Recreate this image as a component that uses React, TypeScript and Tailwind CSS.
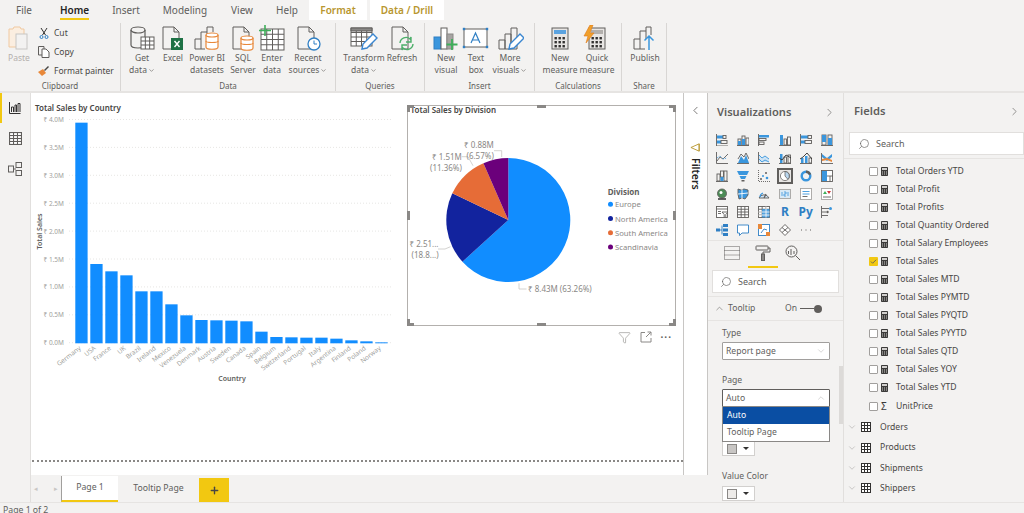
import { ChevronDown, ChevronLeft, ChevronRight, ChevronUp, Funnel, Plus, Search } from "lucide-react";
import type { ReactNode } from "react";

const G = "#605e5c";
const B = "#3a96dd";
const O = "#e8883a";

const topTabs = [
  { label: "File", w: "w-[48px]" },
  { label: "Home", w: "w-[53px]", active: true },
  { label: "Insert", w: "w-[50px]" },
  { label: "Modeling", w: "w-[68px]" },
  { label: "View", w: "w-[46px]" },
  { label: "Help", w: "w-[44px]" },
];

const docPath = "M4 2h11l5 5v17H4z M15 2v5h5";

function Ico({ children }: { children: ReactNode }) {
  return (
    <svg viewBox="0 0 28 26" className="w-[28px] h-[26px]" fill="none" stroke={G} strokeWidth="1">
      {children}
    </svg>
  );
}

const grid = (x: number, y: number, w: number, h: number, c: number, r: number, color = G) => (
  <g stroke={color} fill="#fff">
    <rect x={x} y={y} width={w} height={h} />
    {Array.from({ length: c - 1 }, (_, i) => (
      <line key={i} x1={x + ((i + 1) * w) / c} x2={x + ((i + 1) * w) / c} y1={y} y2={y + h} />
    ))}
    {Array.from({ length: r - 1 }, (_, i) => (
      <line key={i} x1={x} x2={x + w} y1={y + ((i + 1) * h) / r} y2={y + ((i + 1) * h) / r} />
    ))}
  </g>
);

const cyl = (x: number, y: number, w: number, h: number, color: string) => (
  <g stroke={color} fill="#fff" strokeWidth="1.2">
    <path d={`M${x} ${y + 2}v${h - 4}c0 3 ${w} 3 ${w} 0v${-(h - 4)}`} />
    <ellipse cx={x + w / 2} cy={y + 2} rx={w / 2} ry="2" />
    <path d={`M${x} ${y + h / 2}c0 2 ${w} 2 ${w} 0`} />
  </g>
);

const calc = (top: string) => (
  <g>
    <rect x="6" y="3" width="16" height="21" fill="#e8e6e4" stroke={G} />
    <rect x="8" y="5" width="12" height="4" fill={top} stroke="none" />
    {[0, 1, 2].map((r) =>
      [0, 1, 2].map((c) => <rect key={`${r}${c}`} x={8.5 + c * 4} y={12 + r * 4} width="2.4" height="2.4" fill="#323130" stroke="none" />),
    )}
  </g>
);

const pencil = (dx: number, dy: number) => (
  <g transform={`translate(${dx} ${dy})`}>
    <path d="M2 17l1-5 10-10 4 4-10 10z" fill="#fff" stroke="#3a86d0" strokeWidth="1.4" />
  </g>
);

const bars3 = <path d="M3 24v-9h6v9 M9 24V9h6v15 M15 24V3h6v21 M3 24h18" />;

const ribbonIcons: Record<string, ReactNode> = {
  getData: (
    <>
      <path d="M3 5v15c0 4 14 4 14 0V5" strokeWidth="1.2" />
      <ellipse cx="10" cy="5" rx="7" ry="3" strokeWidth="1.2" />
      {grid(13, 12, 13, 12, 3, 3)}
    </>
  ),
  excel: (
    <>
      <path d={docPath} />
      <rect x="12" y="13" width="12" height="12" fill="#1e7145" stroke="none" />
      <path d="M15.5 16l5 6m0-6l-5 6" stroke="#fff" strokeWidth="1.4" />
    </>
  ),
  pbi: (
    <>
      <path d="M2 24V14h6v10 M8 14V7h6v5 M14 7V2h6v5" />
      <path d="M2 24h10" />
      {cyl(13, 8, 12, 16, O)}
    </>
  ),
  sql: (
    <>
      <path d={docPath} />
      {cyl(12, 11, 12, 14, O)}
    </>
  ),
  enter: (
    <>
      {grid(3, 4, 23, 21, 4, 4)}
      <path d="M7 0v11M1 5.5h12" stroke="#3fae5a" strokeWidth="1.6" />
    </>
  ),
  recent: (
    <>
      <path d={docPath} />
      <circle cx="20" cy="19" r="6" fill="#fff" stroke="#2f7fc4" strokeWidth="1.3" />
      <path d="M20 15.5V19h3" stroke="#2f7fc4" />
    </>
  ),
  transform: (
    <>
      {grid(1, 3, 21, 18, 4, 4)}
      <path d="M1 3h21v3H1z" fill="#8a8886" stroke={G} />
      {pencil(10, 7)}
    </>
  ),
  refresh: (
    <>
      <path d={docPath} />
      <path d="M12 18a6 6 0 0 1 10-4l1-2v5h-5" stroke="#4caf6a" strokeWidth="1.4" />
      <path d="M25 19a6 6 0 0 1-10 4l-1 2v-5h5" stroke="#4caf6a" strokeWidth="1.4" />
    </>
  ),
  newVisual: (
    <>
      <rect x="2" y="12" width="7" height="12" fill="#3a96dd" stroke="#2f7fc4" />
      <rect x="9" y="3" width="6" height="21" fill="#fff" />
      <rect x="15" y="9" width="6" height="15" fill="#a6a4a2" stroke="#8a8886" />
      <path d="M20 14v11M14.500 19.500h11" stroke="#3fae5a" strokeWidth="1.8" />
    </>
  ),
  textBox: (
    <>
      <rect x="2" y="4" width="23" height="18" fill="#fff" stroke="#605e5c" />
      {[[2, 4], [25, 4], [2, 22], [25, 22]].map(([x, y]) => (
        <rect key={`${x}${y}`} x={x - 1.2} y={y - 1.2} width="2.4" height="2.4" fill="#2f7fc4" stroke="none" />
      ))}
      <path d="M9 18l4.500-10 4.500 10M10.500 15h6" stroke="#2f7fc4" strokeWidth="1.2" />
    </>
  ),
  moreVisuals: (
    <>
      {bars3}
      {pencil(11, 7)}
    </>
  ),
  newMeasure: calc("#5ba3e0"),
  quickMeasure: (
    <>
      {calc("#b3b0ad")}
      <path d="M7 0L1 11h4l-2 7 8-10H7l3-8z" fill="#f0a02c" stroke="#e07b1a" strokeWidth="0.6" />
    </>
  ),
  publish: (
    <>
      <path d="M3 24V14h6v10 M9 14V6h6v8 M15 6V2h5v8 M3 24h11" />
      <path d="M18 25V11M13.500 15.500L18 11l4.500 4.500" stroke="#3a96dd" strokeWidth="1.5" />
    </>
  ),
};

const ribbonGroups = [
  {
    label: "Data",
    w: "w-[215px]",
    pl: "pl-[3px]",
    items: [
      { icon: "getData", l1: "Get", l2: "data", w: "w-[36px]", more: true },
      { icon: "excel", l1: "Excel", w: "w-[26px]" },
      { icon: "pbi", l1: "Power BI", l2: "datasets", w: "w-[42px]" },
      { icon: "sql", l1: "SQL", l2: "Server", w: "w-[30px]" },
      { icon: "enter", l1: "Enter", l2: "data", w: "w-[28px]" },
      { icon: "recent", l1: "Recent", l2: "sources", w: "w-[44px]", more: true },
    ],
  },
  {
    label: "Queries",
    w: "w-[89px]",
    pl: "pl-[5px]",
    items: [
      { icon: "transform", l1: "Transform", l2: "data", w: "w-[46px]", more: true },
      { icon: "refresh", l1: "Refresh", w: "w-[30px]" },
    ],
  },
  {
    label: "Insert",
    w: "w-[110px]",
    pl: "pl-[6px]",
    items: [
      { icon: "newVisual", l1: "New", l2: "visual", w: "w-[30px]" },
      { icon: "textBox", l1: "Text", l2: "box", w: "w-[30px]" },
      { icon: "moreVisuals", l1: "More", l2: "visuals", w: "w-[38px]", more: true },
    ],
  },
  {
    label: "Calculations",
    w: "w-[87px]",
    pl: "pl-[6px]",
    items: [
      { icon: "newMeasure", l1: "New", l2: "measure", w: "w-[38px]" },
      { icon: "quickMeasure", l1: "Quick", l2: "measure", w: "w-[36px]" },
    ],
  },
  {
    label: "Share",
    w: "w-[45px]",
    pl: "pl-[5px]",
    items: [{ icon: "publish", l1: "Publish", w: "w-[36px]" }],
  },
];

const countries = [
  ["Germany", 83], ["USA", 507], ["France", 529], ["UK", 541], ["Brazil", 589], ["Ireland", 589], ["Mexico", 628],
  ["Venezuela", 661], ["Denmark", 675], ["Austria", 676], ["Sweden", 677], ["Canada", 679], ["Spain", 710], ["Belgium", 726],
  ["Switzerland", 727], ["Portugal", 728], ["Italy", 728], ["Argentina", 731], ["Finland", 736], ["Poland", 739], ["Norway", 742],
] as const;

const axisTicks = ["4.0", "3.5", "3.0", "2.5", "2.0", "1.5", "1.0", "0.5", "0.0"];

const pieSlices = [
  { name: "Europe", pct: 63.26, color: "#118dff" },
  { name: "North America", pct: 18.81, color: "#12239e" },
  { name: "South America", pct: 11.36, color: "#e66c37" },
  { name: "Scandinavia", pct: 6.57, color: "#6b007b" },
];

function slicePaths() {
  let start = 0;
  return pieSlices.map((s) => {
    const end = start + (s.pct / 100) * Math.PI * 2;
    const x1 = 508.3 + 62 * Math.sin(start);
    const y1 = 220 - 62 * Math.cos(start);
    const x2 = 508.3 + 62 * Math.sin(end);
    const y2 = 220 - 62 * Math.cos(end);
    const large = s.pct > 50 ? 1 : 0;
    start = end;
    return { ...s, d: `M508.3 220L${x1} ${y1}A62 62 0 ${large} 1 ${x2} ${y2}Z` };
  });
}

const vizIcons: ReactNode[] = [
  <><path d="M.5 0v12h12" /><rect x="1" y="1.500" width="6" height="3" fill={B} stroke="none" /><rect x="7" y="1.500" width="3" height="3" /><rect x="1" y="6.500" width="4" height="3" fill={B} stroke="none" /><rect x="5" y="6.500" width="6" height="3" /></>,
  <><path d="M0 11.500h12" /><rect x="1" y="5" width="3" height="6" /><rect x="1" y="7" width="3" height="4" fill={B} stroke="none" /><rect x="5" y="2" width="3" height="9" /><rect x="5" y="5" width="3" height="6" fill={B} stroke="none" /><rect x="9" y="4" width="3" height="7" /></>,
  <><path d="M.5 0v12" /><rect x="1" y="1" width="10" height="2.500" fill={B} stroke="none" /><rect x="1" y="4.500" width="7" height="2" /><rect x="1" y="8" width="5" height="2.500" /></>,
  <><path d="M0 11.500h12" /><rect x="1" y="1" width="3" height="10" fill={B} stroke="none" /><rect x="5" y="5" width="2.500" height="6" /><rect x="8.500" y="3" width="3" height="8" /></>,
  <><path d="M.5 0v12" /><rect x="1" y="1.500" width="7" height="3" fill={B} stroke="none" /><rect x="8" y="1.500" width="3.500" height="3" /><rect x="1" y="6.500" width="4" height="3" fill={B} stroke="none" /><rect x="5" y="6.500" width="6.500" height="3" /></>,
  <><path d="M0 11.500h12" /><rect x="1" y="1" width="4" height="10" /><rect x="1" y="1" width="4" height="7" fill={B} stroke="none" /><rect x="7" y="1" width="4" height="10" /><rect x="7" y="4" width="4" height="7" fill={B} stroke="none" /></>,
  <><path d="M.5 0v11.500H12" /><path d="M1 9l3-4 3 2 5-5" /><path d="M1 6l3-2 3 3 4-1" stroke={B} strokeDasharray="1 1" /></>,
  <><path d="M0 11.500h12" /><path d="M1 11l3-7 3 4 2-5 3 8z" fill={B} stroke="none" /><path d="M1 7l3-5 3 3 2-4 3 6" /></>,
  <><path d="M.5 0v11.500H12" /><path d="M1 3l3 3 3-2 4 3v3H1z" fill="#cfe4f5" stroke="none" /><path d="M1 3l3 3 3-2 4 3" stroke={B} /><path d="M1 7l3 3 3-2 4 2" stroke={B} /></>,
  <><path d="M0 11.500h12" /><rect x="1" y="2" width="2.500" height="9" fill={B} stroke="none" /><rect x="5" y="5" width="2.500" height="6" /><rect x="9" y="3" width="2.500" height="8" /><path d="M0 6l3 2 4-5 5 3" stroke="#323130" /></>,
  <><path d="M0 11.500h12" /><rect x="1" y="6" width="2.500" height="5" fill={B} stroke="none" /><rect x="5" y="4" width="2.500" height="7" fill={B} stroke="none" /><rect x="9" y="6" width="2.500" height="5" /><path d="M0 7l3-2 4-4 5 6" stroke="#323130" /></>,
  <><path d="M.5 1v10.500H12" /><path d="M1 2l5 4 5-4v3L6 9 1 5z" fill={B} stroke="none" /><path d="M1 7l5-1 5 2v2l-5-2-5 1z" fill={O} stroke="none" /></>,
  <><path d="M0 11.500h12" /><rect x="1" y="4" width="3" height="7" /><rect x="4.500" y="1" width="3" height="6" /><rect x="8" y="1" width="3" height="10" /><rect x="4.500" y="7" width="3" height="4" fill={B} stroke="none" /></>,
  <><path d="M0 1h12l-2 4H2z" fill={B} stroke="none" /><path d="M2.500 6h7L8 9H4z" fill={B} stroke="none" /><path d="M4.500 10h3v1.500h-3z" fill={G} stroke="none" /></>,
  <><path d="M.5 0v11.500H12" strokeDasharray="1 1" /><circle cx="3" cy="9" r="1" fill={G} stroke="none" /><circle cx="5" cy="6" r="1" fill={B} stroke="none" /><circle cx="8" cy="3" r="1" fill={G} stroke="none" /><circle cx="9" cy="8" r="1.300" fill={B} stroke="none" /></>,
  <><circle cx="6" cy="6" r="5.500" fill="#fff" stroke={G} /><path d="M6 6V.5A5.500 5.500 0 0 1 9.500 10z" fill="#b9d6ee" stroke={G} /></>,
  <><circle cx="6" cy="6" r="4.300" stroke={B} strokeWidth="2.400" /><path d="M6 1.700a4.300 4.300 0 0 1 4 3" stroke={G} strokeWidth="2.400" /></>,
  <><rect x=".5" y=".5" width="11" height="11" fill="#fff" /><rect x="1" y="1" width="5" height="10" fill={B} stroke="none" /><path d="M6 6h6M9 6v6" /></>,
  <><circle cx="6" cy="5.500" r="4.500" fill="#4b8b55" stroke={G} /><circle cx="5" cy="4.500" r="1.500" fill="#fff" stroke="none" /><path d="M2 11h8" stroke="#323130" strokeWidth="1.500" /></>,
  <><path d="M1 1l3 1 3-1 4 1v5l-3 4-3-1-3 1-1-5z" fill={B} stroke={G} /><path d="M5 1v10M1 6l10-1" stroke="#fff" /></>,
  <><path d="M1 10a5.500 5.500 0 0 1 10 0z" fill="#cfe4f5" stroke={G} /><path d="M6 10l2-4" stroke={G} strokeWidth="1.300" /><path d="M2 9a4.500 4.500 0 0 1 3-4" stroke={B} strokeWidth="1.300" /></>,
  <><rect x=".5" y="1.500" width="11" height="9" fill="#d9e9f5" stroke="#a6a4a2" /><path d="M3 4v4M5 4h2v2H5v2h2M9 4v4" stroke={B} strokeWidth=".8" /></>,
  <><rect x=".5" y=".5" width="11" height="11" fill="#fff" stroke="#a6a4a2" /><path d="M2.500 3.500h7M2.500 6h7" stroke={B} /><path d="M2.500 8.500h5" stroke={G} /></>,
  <><rect x=".5" y=".5" width="11" height="11" fill="#fff" stroke="#a6a4a2" /><path d="M2 6l2-3 2 3z" fill="#3fae5a" stroke="none" /><path d="M6 3h4L8 6z" fill="#d13438" stroke="none" /><path d="M2 9h8" stroke={G} /></>,
  <><rect x=".5" y=".5" width="11" height="11" fill="#fff" /><path d="M.5 3h11M2 5.500h3M2 7.500h3" /><path d="M6 6h6L9.800 8.500V11.500H8.200V8.500z" fill="#fff" stroke={G} /></>,
  grid(.5, .5, 11, 11, 3, 4),
  <>{grid(.5, .5, 11, 11, 3, 4)}<rect x="4" y="3" width="7.500" height="8.500" fill={B} opacity=".85" stroke="none" /><path d="M.5 6h11M.5 9h11M8 .5v11" stroke="#fff" /></>,
  null,
  null,
  <><path d="M.5 0v12" /><path d="M1 2.500h7M1 6h4M1 9.500h6" stroke={G} /><circle cx="9.500" cy="2.500" r="1.500" fill={B} stroke="none" /><circle cx="6.500" cy="6" r="1.200" fill={G} stroke="none" /></>,
  <><rect x="0" y="4.500" width="4" height="3" fill="#2f7fc4" stroke="none" /><path d="M4 6h2M6 1.500v9" stroke="#2f7fc4" /><rect x="7" y="0" width="5" height="3" fill="#2f7fc4" stroke="none" /><rect x="7" y="4.500" width="5" height="3" fill="#2f7fc4" stroke="none" /><rect x="7" y="9" width="5" height="3" fill="#2f7fc4" stroke="none" /></>,
  <path d="M.5 1v8h2v2.500L5 9h6.500V1z" fill="#fff" stroke="#2f7fc4" />,
  <><rect x=".5" y=".5" width="11" height="11" fill="#fff" stroke="#2f7fc4" /><rect x="0" y="0" width="4" height="5" fill={O} stroke="none" /><rect x="8" y="8" width="4" height="4" fill={O} stroke="none" /><path d="M3 9l3-4 3 1" stroke="#2f7fc4" /></>,
  <><path d="M6 .5L11.500 6 6 11.500.5 6z" fill="#fff" stroke={G} /><path d="M3 3.500l6 5M9 3.500l-6 5" stroke={G} /></>,
  <path d="M1 6h1M5.500 6h1M10 6h1" stroke={G} strokeWidth="1.200" />,
];

const fieldRows = [
  "Total Orders YTD", "Total Profit", "Total Profits", "Total Quantity Ordered", "Total Salary Employees", "Total Sales",
  "Total Sales MTD", "Total Sales PYMTD", "Total Sales PYQTD", "Total Sales PYYTD", "Total Sales QTD", "Total Sales YOY", "Total Sales YTD",
];

const tables = ["Orders", "Products", "Shipments", "Shippers"];

function SearchBox({ className }: { className: string }) {
  return (
    <div className={`flex items-center gap-[6px] bg-white border border-[#e1dfdd] h-[23px] text-[#605e5c] text-[9px] ${className}`}>
      <Search size={12} strokeWidth={1.3} className="-scale-x-100" />
      Search
    </div>
  );
}

function Swatch({ fill }: { fill: string }) {
  return (
    <div className="flex items-center gap-[6px] w-[33px] h-[15px] bg-white border border-[#d2d0ce] pl-[4px]">
      <div className={`w-[10px] h-[10px] border border-[#8a8886] ${fill}`} />
      <div className="w-0 h-0 border-x-[3px] border-x-transparent border-t-[3px] border-t-[#323130]" />
    </div>
  );
}

export default function App() {
  return (
    <div className="w-[1024px] h-[513px] overflow-hidden flex flex-col bg-[#f3f2f1] text-[#484644] font-['Noto_Sans',sans-serif]">
      {/* Tabs */}
      <div className="h-[20px] flex items-center text-[10px] shrink-0">
        {topTabs.map((t) => (
          <div key={t.label} className={`${t.w} h-full relative flex items-center justify-center ${t.active ? "font-semibold text-[#252423]" : "text-[#605e5c]"}`}>
            {t.label}
            {t.active && <div className="absolute left-[12px] right-[12px] bottom-0 h-[2px] bg-[#f2c811]" />}
          </div>
        ))}
        <div className="w-[58px] h-full bg-white flex items-center justify-center text-[#b8962e] font-semibold">Format</div>
        <div className="w-[3px]" />
        <div className="w-[74px] h-full bg-white flex items-center justify-center text-[#b8962e] font-semibold">Data / Drill</div>
      </div>

      {/* Ribbon */}
      <div className="h-[73px] flex shrink-0 border-b-2 border-[#e6e4e2] text-[8.5px] leading-[12px] text-[#605e5c]">
        <div className="w-[121px] h-[68px] mt-[3px] pt-[2px] flex flex-col border-r border-[#d8d6d4]">
          <div className="flex h-[56px]">
            <div className="w-[38px] flex flex-col items-center text-[#b3b0ad]">
              <svg viewBox="0 0 28 26" className="w-[28px] h-[26px] mb-[1px]" fill="none">
                <path d="M4 4h4l1-2h6l1 2h3v18H4z" stroke="#f0c9a0" fill="#fbeee0" />
                <rect x="11" y="9" width="11" height="15" fill="#f3f2f1" stroke="#c8c6c4" />
              </svg>
              <span>Paste</span>
            </div>
            <div className="flex flex-col gap-[6px] text-[#484644] pt-[1px]">
              <div className="flex items-center gap-[4px] h-[13px]">
                <svg viewBox="0 0 12 12" className="w-[12px] h-[12px]" fill="none" stroke="#323130">
                  <path d="M3 1l4.500 7M9 1L4.500 8" />
                  <circle cx="3.500" cy="10" r="1.500" stroke="#2f7fc4" />
                  <circle cx="8.500" cy="10" r="1.500" stroke="#2f7fc4" />
                </svg>
                Cut
              </div>
              <div className="flex items-center gap-[4px] h-[13px]">
                <svg viewBox="0 0 12 12" className="w-[12px] h-[12px]" fill="none" stroke={G}>
                  <path d="M4 9H.5V.5H6V3" />
                  <path d="M4 3h4l3 3v5.500H4z" fill="#fff" />
                </svg>
                Copy
              </div>
              <div className="flex items-center gap-[4px] h-[13px] whitespace-nowrap">
                <svg viewBox="0 0 12 12" className="w-[12px] h-[12px]">
                  <path d="M0 7l5-3 3 4-4 3z" fill={O} />
                  <path d="M6 5l4-4 1 1-4 4z" fill="#484644" />
                </svg>
                Format painter
              </div>
            </div>
          </div>
          <div className="text-center text-[8px] leading-[10px]">Clipboard</div>
        </div>
        {ribbonGroups.map((g) => (
          <div key={g.label} className={`${g.w} h-[68px] mt-[3px] pt-[2px] flex flex-col border-r border-[#d8d6d4]`}>
            <div className={`flex h-[56px] ${g.pl}`}>
              {g.items.map((it) => (
                <div key={it.l1 + it.icon} className={`${it.w} flex flex-col items-center whitespace-nowrap`}>
                  <div className="h-[26px] mb-[1px] flex justify-center">
                    <Ico>{ribbonIcons[it.icon]}</Ico>
                  </div>
                  <span>{it.l1}</span>
                  {it.l2 && (
                    <span className="flex items-center gap-[1px]">
                      {it.l2}
                      {it.more && <ChevronDown size={7} strokeWidth={2} />}
                    </span>
                  )}
                </div>
              ))}
            </div>
            <div className="text-center text-[8px] leading-[10px]">{g.label}</div>
          </div>
        ))}
      </div>

      {/* Body */}
      <div className="h-[409px] flex shrink-0">
        <div className="w-[31px] border-r border-[#e1dfdd] flex flex-col shrink-0">
          <div className="h-[30px] border-l-[2px] border-[#f2c811] flex items-center justify-center pr-[2px]">
            <svg viewBox="0 0 12 12" className="w-[12px] h-[12px]" fill="none" stroke="#323130">
              <path d="M.5 0v11.500h11" />
              <path d="M2.500 10V5h2v5M6 10V3h1.500v7M9 10V1.500h2V10" />
            </svg>
          </div>
          <div className="h-[30px] flex items-center justify-center">
            <svg viewBox="0 0 12 12" className="w-[13px] h-[13px]" fill="none">{grid(.5, .5, 11, 11, 3, 4, G)}</svg>
          </div>
          <div className="h-[32px] flex items-center justify-center">
            <svg viewBox="0 0 14 14" className="w-[14px] h-[14px]" fill="none" stroke={G}>
              <rect x=".5" y="4" width="5" height="6" />
              <rect x="8" y=".5" width="5.500" height="5" />
              <rect x="8" y="8.500" width="5.500" height="5" />
              <path d="M5.500 7H8" />
            </svg>
          </div>
        </div>

        <div className="w-[677px] flex flex-col shrink-0">
          <div className="h-[382px] flex">
            {/* Report canvas */}
            <div className="w-[652px] bg-white flex flex-col">
              <div className="flex pt-[7px]">
                <svg viewBox="31 100 370 290" className="w-[370px] h-[290px] shrink-0 text-[7px]" fontFamily="'Noto Sans', sans-serif">
                  <text x="35" y="111" fontSize="8" fontWeight="600" fill="#484644">Total Sales by Country</text>
                  {axisTicks.map((t, i) => {
                    const y = 119.500 + i * 27.900;
                    return (
                      <g key={t}>
                        <line x1="69" x2="392" y1={y} y2={y} stroke="#e1dfdd" strokeWidth=".8" strokeDasharray="1 2" />
                        <text x="64" y={y + 2.500} textAnchor="end" fill="#a19f9d" fontSize="6.500">₹ {t}M</text>
                      </g>
                    );
                  })}
                  {countries.map(([name, top], i) => {
                    const y = 95 + top / 3;
                    const x = 75.300 + i * 15;
                    return (
                      <g key={name}>
                        <rect x={x} y={y} width="12.300" height={343.300 - y} fill="#118dff" />
                        <text x={x + 6} y="349" textAnchor="end" fill="#a19f9d" fontSize="6.500" transform={`rotate(-38 ${x + 6} 349)`}>{name}</text>
                      </g>
                    );
                  })}
                  <text x="0" y="0" fontSize="7" fontWeight="600" fill="#605e5c" textAnchor="middle" transform="translate(41.500 231.500) rotate(-90)">Total Sales</text>
                  <text x="232" y="381" fontSize="7" fontWeight="600" fill="#605e5c" textAnchor="middle">Country</text>
                </svg>

                <div className="ml-[6px] mt-[5px] w-[269px] shrink-0">
                  <div className="relative h-[221px] border border-[#b3b0ad]">
                    <svg viewBox="408 106 267 219" className="w-[267px] h-[219px]" fontFamily="'Noto Sans', sans-serif">
                      <text x="410.500" y="113" fontSize="8" fontWeight="600" fill="#484644">Total Sales by Division</text>
                      {slicePaths().map((s) => (
                        <path key={s.name} d={s.d} fill={s.color} />
                      ))}
                      <g fill="none" stroke="#c8c6c4" strokeWidth=".8">
                        <path d="M519 283.300V289h7.500" />
                        <path d="M438 249h7l5.500-2.300" />
                        <path d="M461.700 156.700h6.300l5 9" />
                        <path d="M494 150.700h7.700v6.300" />
                      </g>
                      <g fontSize="8" fill="#8a8886">
                        <text x="528" y="292">₹ 8.43M (63.26%)</text>
                        <text x="409.500" y="247">₹ 2.51...</text>
                        <text x="411.500" y="258">(18.8...)</text>
                        <text x="432" y="160">₹ 1.51M</text>
                        <text x="430" y="170.500">(11.36%)</text>
                        <text x="464" y="148">₹ 0.88M</text>
                        <text x="466.500" y="158.500">(6.57%)</text>
                      </g>
                      <text x="607.700" y="195" fontSize="8" fontWeight="700" fill="#605e5c">Division</text>
                      {pieSlices.map((s, i) => {
                        const y = 204.300 + i * 14.250;
                        return (
                          <g key={s.name}>
                            <circle cx="610.500" cy={y} r="2.500" fill={s.color} />
                            <text x="615" y={y + 3} fontSize="7.700" fill="#8a8886">{s.name}</text>
                          </g>
                        );
                      })}
                    </svg>
                    {/* selection handles */}
                    <div className="absolute -left-px -top-px w-[7px] h-[7px] border-l-[3px] border-t-[3px] border-[#8a8886]" />
                    <div className="absolute -right-px -top-px w-[7px] h-[7px] border-r-[3px] border-t-[3px] border-[#8a8886]" />
                    <div className="absolute -left-px -bottom-px w-[7px] h-[7px] border-l-[3px] border-b-[3px] border-[#8a8886]" />
                    <div className="absolute -right-px -bottom-px w-[7px] h-[7px] border-r-[3px] border-b-[3px] border-[#8a8886]" />
                    <div className="absolute left-[129px] -top-px w-[9px] h-[3px] bg-[#8a8886]" />
                    <div className="absolute left-[129px] -bottom-px w-[9px] h-[3px] bg-[#8a8886]" />
                    <div className="absolute -left-px top-[105px] w-[3px] h-[9px] bg-[#8a8886]" />
                    <div className="absolute -right-px top-[105px] w-[3px] h-[9px] bg-[#8a8886]" />
                  </div>
                  <div className="flex items-center justify-end gap-[9px] pr-[4px] mt-[4px] h-[14px] text-[#8a8886]">
                    <Funnel size={13} strokeWidth={1.1} />
                    <svg viewBox="0 0 12 12" className="w-[12px] h-[12px]" fill="none" stroke="#8a8886">
                      <path d="M5 1.500H1v9.500h10V7" />
                      <path d="M6 6l5-5M7.500 1H11v3.500" />
                    </svg>
                    <span className="text-[10px] leading-[8px] tracking-[1px] font-bold text-[#605e5c]">···</span>
                  </div>
                </div>
              </div>
              <div className="mt-[70px] ml-px border-t-2 border-dotted border-[#8a8886]" />
            </div>

            {/* Filters pane */}
            <div className="w-[25px] bg-white border-x border-[#c8c6c4] flex flex-col items-center text-[#484644]">
              <ChevronLeft size={13} strokeWidth={1.3} className="mt-[11px]" />
              <svg viewBox="0 0 12 12" className="w-[11px] h-[11px] mt-[25px]" fill="none" stroke="#b8962e">
                <path d="M1 6l9-4v8zM10 2v8" />
              </svg>
              <span className="mt-[5px] [writing-mode:vertical-rl] text-[10.5px] leading-[12px] font-semibold text-[#252423]">Filters</span>
            </div>
          </div>

          {/* Page tabs */}
          <div className="h-[27px] flex text-[8.700px] text-[#605e5c] border-t border-[#f3f2f1]">
            <div className="w-[30px] flex items-center justify-between text-[#c8c6c4] px-[3px] shrink-0">
              <span className="text-[7px]">◂</span>
              <span className="text-[7px]">▸</span>
            </div>
            <div className="w-[57px] h-[26px] bg-white border-l border-[#a19f9d] border-b-2 border-b-[#f2c811] flex items-center justify-center">Page 1</div>
            <div className="w-[81px] flex items-center justify-center">Tooltip Page</div>
            <div className="w-[30px] h-[24px] mt-[2px] bg-[#f2c811] flex items-center justify-center text-[#484644]">
              <Plus size={11} strokeWidth={3} />
            </div>
          </div>
        </div>

        {/* Visualizations pane */}
        <div className="w-[136px] shrink-0 border-r border-[#e1dfdd] relative flex flex-col">
          <div className="h-[38px] flex items-center justify-between pl-[9px] pr-[7px] text-[11.100px] font-semibold text-[#605e5c]">
            Visualizations
            <ChevronRight size={13} strokeWidth={1.2} />
          </div>
          <div className="grid grid-cols-6 auto-rows-[18px] pl-[4px] pr-[6px] h-[109px]">
            {vizIcons.map((ic, i) => (
              <div key={i} className="flex items-center justify-center">
                {i === 27 ? (
                  <span className="text-[#2f7fc4] text-[12px] font-bold">R</span>
                ) : i === 28 ? (
                  <span className="text-[#2f7fc4] text-[12px] font-bold">Py</span>
                ) : (
                  <svg
                    viewBox="0 0 12 12"
                    className={i === 15 ? "w-[16px] h-[16px] p-[1px] border-2 border-[#605e5c] bg-[#e8e6e4]" : "w-[12px] h-[12px]"}
                    fill="none"
                    stroke={G}
                    strokeWidth=".9"
                  >
                    {ic}
                  </svg>
                )}
              </div>
            ))}
          </div>
          <div className="h-[30px] border-t border-[#e6e4e2] flex items-start pl-[16px] pt-[4px]">
            <svg viewBox="0 0 16 16" className="w-[16px] h-[16px]" fill="none" stroke={G} strokeDasharray="1 1">
              <rect x=".5" y="1.500" width="15" height="13" />
              <path d="M.5 5.500h15M.5 10h15" />
            </svg>
            <div className="relative h-[24px] w-[30px] ml-[8px] flex justify-center">
              <svg viewBox="0 0 16 16" className="w-[16px] h-[16px]" fill="none" stroke={G}>
                <rect x="1" y="1" width="12" height="4" rx=".5" />
                <path d="M13 3h2v4H8v2" />
                <rect x="6.500" y="9" width="3" height="6.500" fill="#8a8886" />
              </svg>
              <div className="absolute bottom-[1px] left-0 right-0 h-[2px] bg-[#f2c811]" />
            </div>
            <svg viewBox="0 0 16 16" className="w-[16px] h-[16px] ml-[7px]" fill="none" stroke={G}>
              <circle cx="6.500" cy="6.500" r="5.500" />
              <path d="M3.500 9V6M6 10V4M9 9V6M10.500 10.500L15 15" />
            </svg>
          </div>
          <SearchBox className="mx-[4px] px-[7px]" />
          <div className="mt-[3px] h-[25px] border-y border-[#e6e4e2] flex items-center px-[6px] text-[8.600px] text-[#605e5c]">
            <ChevronUp size={11} strokeWidth={1.2} />
            <span className="ml-[3px]">Tooltip</span>
            <span className="ml-auto">On</span>
            <div className="ml-[3px] w-[14px] h-px bg-[#605e5c]" />
            <div className="w-[8px] h-[8px] rounded-full bg-[#605e5c] mr-[15px]" />
          </div>
          <div className="pl-[14px] pr-[13px] text-[8.600px] text-[#605e5c] flex flex-col">
            <span className="mt-[6px] leading-[13px]">Type</span>
            <div className="mt-[2px] h-[18px] w-[108px] bg-white border border-[#a19f9d] rounded-[1px] flex items-center justify-between px-[3px]">
              Report page
              <ChevronDown size={10} strokeWidth={1} className="text-[#a19f9d]" />
            </div>
            <span className="mt-[14px] leading-[13px]">Page</span>
            <div className="mt-[2px] relative h-[18px] w-[108px] bg-white border border-[#605e5c] rounded-[1px] flex items-center justify-between px-[3px]">
              Auto
              <ChevronUp size={10} strokeWidth={1} className="text-[#a19f9d]" />
              <div className="absolute left-[-1px] top-[16px] w-[108px] bg-white border border-[#8a8886] z-10">
                <div className="h-[17px] bg-[#0a4ea3] text-white flex items-center px-[4px]">Auto</div>
                <div className="h-[17px] flex items-center px-[4px]">Tooltip Page</div>
              </div>
            </div>
            <div className="mt-[34px]">
              <Swatch fill="bg-[#c8c6c4]" />
            </div>
            <span className="mt-[14px] leading-[13px]">Value Color</span>
            <div className="mt-[3px]">
              <Swatch fill="bg-[#edebe9]" />
            </div>
          </div>
          {/* scrollbar thumb */}
          <div className="absolute right-[0px] top-[273px] w-[4px] h-[58px] bg-[#dcdad8]" />
        </div>

        {/* Fields pane */}
        <div className="w-[180px] shrink-0 flex flex-col overflow-hidden">
          <div className="h-[37px] flex items-center justify-between pl-[10px] pr-[3px] text-[11.200px] font-semibold text-[#605e5c]">
            Fields
            <ChevronRight size={13} strokeWidth={1.2} />
          </div>
          <SearchBox className="ml-[5px] px-[8px] mt-[2px] shrink-0" />
          <div className="mt-[3px] border-t border-[#e6e4e2] pt-[3px] flex flex-col text-[8.600px] text-[#484644]">
            {fieldRows.map((f) => (
              <div key={f} className="h-[18px] flex items-center pl-[25px]">
                <div className={`w-[9px] h-[9px] rounded-[1px] flex items-center justify-center ${f === "Total Sales" ? "bg-[#f2c811]" : "bg-white border border-[#a19f9d]"}`}>
                  {f === "Total Sales" && (
                    <svg viewBox="0 0 8 8" className="w-[7px] h-[7px]" fill="none" stroke="#605e5c">
                      <path d="M1 4l2 2 4-4" />
                    </svg>
                  )}
                </div>
                <svg viewBox="0 0 7 9" className="w-[7px] h-[9px] ml-[3px]">
                  <rect width="7" height="9" rx=".8" fill="#3b3a39" />
                  <rect x="1" y="1" width="5" height="2" fill="#d2d0ce" />
                  <path d="M1 4.500h1v1H1zM3 4.500h1v1H3zM5 4.500h1v1H5zM1 6.500h1v1H1zM3 6.500h1v1H3zM5 6.500h1v1H5z" fill="#d2d0ce" />
                </svg>
                <span className="ml-[8px]">{f}</span>
              </div>
            ))}
            <div className="h-[18px] mt-px flex items-center pl-[25px]">
              <div className="w-[9px] h-[9px] rounded-[1px] bg-white border border-[#a19f9d]" />
              <span className="w-[7px] ml-[3px] text-[10px] leading-[10px] text-[#3b3a39]">Σ</span>
              <span className="ml-[8px]">UnitPrice</span>
            </div>
            <div className="mt-[2px] flex flex-col">
              {tables.map((t) => (
                <div key={t} className="h-[20.400px] flex items-center pl-[3px]">
                  <ChevronDown size={10} strokeWidth={1} className="text-[#8a8886]" />
                  <svg viewBox="0 0 10 10" className="w-[10px] h-[10px] ml-[4px]" fill="none">{grid(.5, .5, 9, 9, 3, 3, "#323130")}</svg>
                  <span className="ml-[9px]">{t}</span>
                </div>
              ))}
            </div>
          </div>
        </div>
      </div>

      {/* Status bar */}
      <div className="flex-1 border-t border-[#e6e4e2] pl-[3px] text-[8.700px] leading-[14px] text-[#605e5c] overflow-hidden">Page 1 of 2</div>
    </div>
  );
}
